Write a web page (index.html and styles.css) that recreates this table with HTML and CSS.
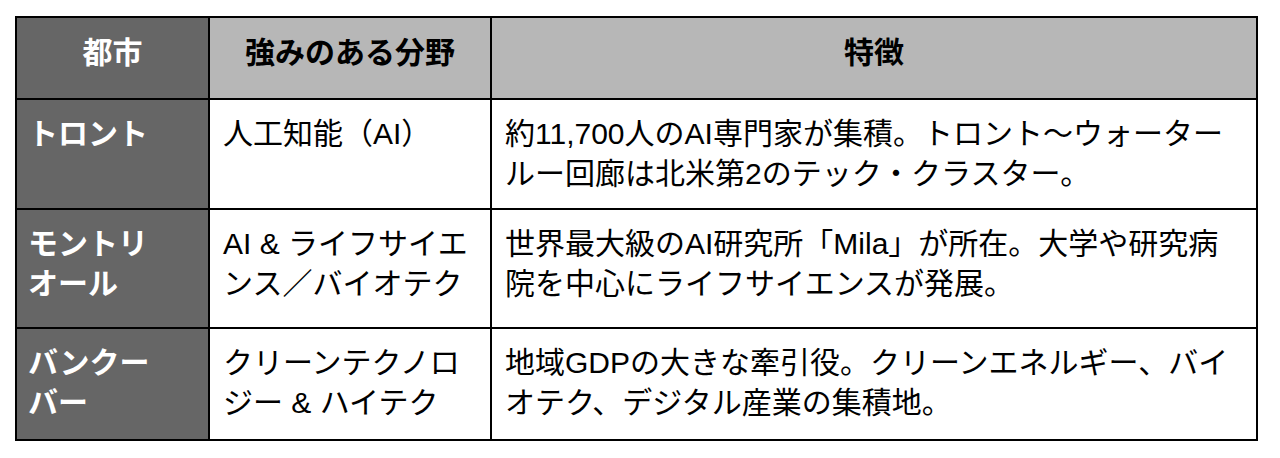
FILE: index.html
```html
<!DOCTYPE html>
<html lang="ja">
<head>
<meta charset="utf-8">
<title>都市と強みのある分野</title>
<link rel="stylesheet" href="styles.css">
</head>
<body>
<table class="cities">
  <thead>
    <tr>
      <th class="col-city">都市</th>
      <th class="col-field">強みのある分野</th>
      <th class="col-note">特徴</th>
    </tr>
  </thead>
  <tbody>
    <tr class="row row-1">
      <th class="city">トロント</th>
      <td>人工知能（AI）</td>
      <td>約11,700人のAI専門家が集積。トロント〜ウォーター<br>ルー回廊は北米第2のテック・クラスター。</td>
    </tr>
    <tr class="row row-2">
      <th class="city">モントリ<br>オール</th>
      <td>AI &amp; ライフサイエ<br>ンス／バイオテク</td>
      <td>世界最大級のAI研究所「Mila」が所在。大学や研究病<br>院を中心にライフサイエンスが発展。</td>
    </tr>
    <tr class="row row-3">
      <th class="city">バンクー<br>バー</th>
      <td>クリーンテクノロ<br>ジー &amp; ハイテク</td>
      <td>地域GDPの大きな牽引役。クリーンエネルギー、バイ<br>オテク、デジタル産業の集積地。</td>
    </tr>
  </tbody>
</table>
</body>
</html>
```
FILE: styles.css
```css
html, body {
  margin: 0;
  padding: 0;
  background: #ffffff;
}

body {
  font-family: "Liberation Sans", "Noto Sans CJK JP", sans-serif;
  font-size: 30px;
  line-height: 40px;
  color: #000000;
}

.cities {
  box-sizing: border-box;
  width: 1243px;
  margin: 16px 0 0 15px;
  border-collapse: separate;
  border-spacing: 0;
  table-layout: fixed;
  border-top: 2px solid #000;
  border-left: 2px solid #000;
}

.cities th,
.cities td {
  box-sizing: border-box;
  border-right: 2px solid #000;
  border-bottom: 2px solid #000;
  padding: 14px 12px 14px 13px;
  text-align: left;
  vertical-align: top;
  font-weight: 400;
  white-space: nowrap;
}

.cities thead th {
  padding: 15px 12px 25px;
  text-align: center;
  font-weight: 700;
  background: #b7b7b7;
  color: #000;
}

.cities thead th.col-city {
  background: #666666;
  color: #ffffff;
}

.col-city { width: 193px; }
.col-field { width: 282px; }
.col-note { width: 766px; }

.cities th.city {
  background: #666666;
  color: #ffffff;
  font-weight: 700;
  padding-left: 11px;
}

.row-2 th,
.row-2 td {
  padding-bottom: 23px;
}

.row-3 th,
.row-3 td {
  padding-bottom: 16px;
}
```
